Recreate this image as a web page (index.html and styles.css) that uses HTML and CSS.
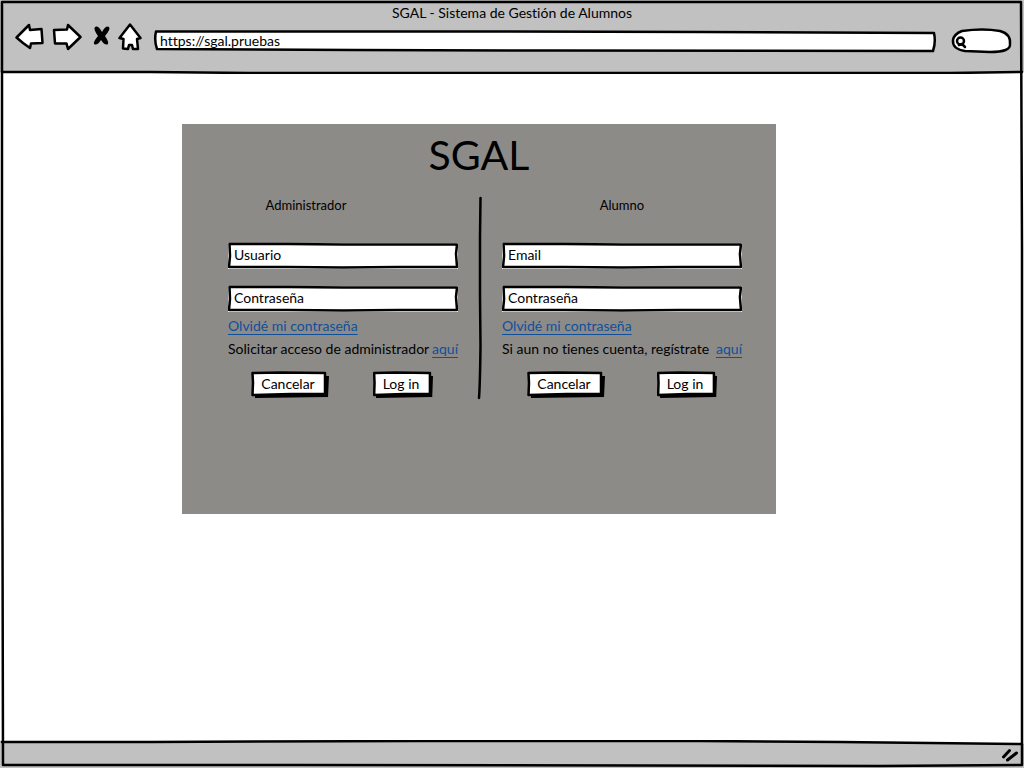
FILE: index.html
```html
<!DOCTYPE html>
<html lang="es">
<head>
<meta charset="utf-8">
<meta name="viewport" content="width=device-width, initial-scale=1">
<title>SGAL - Sistema de Gestión de Alumnos</title>
<link rel="stylesheet" href="styles.css">
</head>
<body>
<svg class="defs" aria-hidden="true">
  <symbol id="sketch-field" viewBox="0 0 230 27" preserveAspectRatio="none">
    <path class="paper" d="M0 1H230V27H0Z"/>
    <path class="ink" d="M1.500 2L60 2L115 2.500L229 2.500L228 12L229 25L170 25L115 25.500L60 25L1 25L2 14Z"/>
  </symbol>
  <symbol id="sketch-button" viewBox="0 0 78 27" preserveAspectRatio="none">
    <path class="solid" d="M4 5H78L77 26L4 27Z"/>
    <path class="paper ink" d="M1.500 2L30 1.500L74 2L74 23L40 23L1.500 24L2 12Z"/>
  </symbol>
</svg>
<div class="window">
  <header class="chrome">
    <p class="window-title">SGAL - Sistema de Gestión de Alumnos</p>
    <div class="toolbar">
      <button class="tool" type="button" aria-label="Atrás"><svg width="30" height="28" viewBox="15 23 30 28"><path class="paper ink" d="M16.500 37.500L29 25L30 30L41.500 29L42.500 43L31 43.500L30 48L23 43Z"/></svg></button>
      <button class="tool tool-forward" type="button" aria-label="Adelante"><svg width="30" height="28" viewBox="52 23 30 28"><path class="paper ink" d="M54 30L67 29.500L68 25L80.500 37L68 49L66.500 43.500L55 43.500Z"/></svg></button>
      <button class="tool tool-stop" type="button" aria-label="Detener"><svg width="18" height="28" viewBox="93 23 18 28"><path class="solid" d="M95 27Q98 25 102 32Q106 25 109 27Q111 29 105 36Q109 42 108 44Q105 46 101 40Q97 46 94 44Q93 42 98 36Q93 29 95 27Z"/></svg></button>
      <button class="tool tool-home" type="button" aria-label="Inicio"><svg width="24" height="28" viewBox="118 23 24 28"><path class="paper ink" d="M130 24.500L140.500 38L137 39L138 49L133 49L132 45H129L128 49L123 48.500L123.500 39L119.500 38Z"/></svg></button>
      <label class="address">
        <svg class="outline" viewBox="0 0 784 22" preserveAspectRatio="none" aria-hidden="true"><path class="paper ink" d="M2 1.500L300 1.500L550 2L781 3Q783 12 780 21L400 20.500L200 20L3 19Q0 10 2 1.500Z"/></svg>
        <input class="text-input" type="text" aria-label="Dirección" value="https://sgal.pruebas">
      </label>
      <label class="search">
        <svg class="outline" viewBox="951 28 61 26" aria-hidden="true"><path class="paper ink" d="M962 31Q983 28 1000 31Q1011 34 1010 44Q1011 52 990 52L965 51Q952 49 953 40Q954 34 962 31Z"/><circle class="ink" cx="960.500" cy="41" r="3.500"/><path class="ink" d="M959 45L962 44L965 47"/></svg>
        <input class="text-input" type="search" aria-label="Buscar">
      </label>
    </div>
    <svg class="rule" viewBox="0 0 1024 4" preserveAspectRatio="none" aria-hidden="true"><path class="fill-page" d="M0 2H1024V4H0Z"/><path class="ink" d="M2 2L150 2L250 3L600 3L950 3L1022 2"/></svg>
  </header>
  <main class="page">
    <section class="card">
      <h1 class="brand">SGAL</h1>
      <div class="forms">
        <form class="login login-admin">
          <h2 class="role">Administrador</h2>
          <label class="field"><svg class="outline" aria-hidden="true"><use href="#sketch-field"/></svg><input class="text-input" type="text" aria-label="Usuario" placeholder="Usuario"></label>
          <label class="field"><svg class="outline" aria-hidden="true"><use href="#sketch-field"/></svg><input class="text-input" type="password" aria-label="Contraseña" placeholder="Contraseña"></label>
          <p class="help"><a href="#recuperar-admin">Olvidé mi contraseña</a></p>
          <p class="help"><span>Solicitar acceso de administrador</span><a href="#acceso">aquí</a></p>
          <div class="actions">
            <button class="button" type="reset"><svg class="outline" aria-hidden="true"><use href="#sketch-button"/></svg><span class="button-text">Cancelar</span></button>
            <button class="button button-small" type="submit"><svg class="outline" aria-hidden="true"><use href="#sketch-button"/></svg><span class="button-text">Log in</span></button>
          </div>
        </form>
        <svg class="divider" viewBox="0 0 6 204" preserveAspectRatio="none" aria-hidden="true"><path class="ink" d="M3.500 2L3 40L3 100L3.500 150Q3 190 2 202"/></svg>
        <form class="login">
          <h2 class="role">Alumno</h2>
          <label class="field"><svg class="outline" aria-hidden="true"><use href="#sketch-field"/></svg><input class="text-input" type="email" aria-label="Email" placeholder="Email"></label>
          <label class="field"><svg class="outline" aria-hidden="true"><use href="#sketch-field"/></svg><input class="text-input" type="password" aria-label="Contraseña" placeholder="Contraseña"></label>
          <p class="help"><a href="#recuperar-alumno">Olvidé mi contraseña</a></p>
          <p class="help"><span>Si aun no tienes cuenta, regístrate</span><a href="#registro">aquí</a></p>
          <div class="actions">
            <button class="button" type="reset"><svg class="outline" aria-hidden="true"><use href="#sketch-button"/></svg><span class="button-text">Cancelar</span></button>
            <button class="button button-small" type="submit"><svg class="outline" aria-hidden="true"><use href="#sketch-button"/></svg><span class="button-text">Log in</span></button>
          </div>
        </form>
      </div>
    </section>
  </main>
  <footer class="status">
    <svg class="rule rule-status" viewBox="0 0 1024 6" preserveAspectRatio="none" aria-hidden="true"><path class="fill-page" d="M0 0H1024V4L840 2L700 1L420 1L2 2Z"/><path class="ink" d="M2 2L150 2L420 1L700 1L840 2L1022 4"/></svg>
    <svg class="grip" width="20" height="16" viewBox="1000 747 20 16" aria-hidden="true"><path class="ink grip-line" d="M1003.500 757L1009.500 750.500M1007.500 760L1016.500 753"/></svg>
  </footer>
  <svg class="frame" viewBox="0 0 1024 768" preserveAspectRatio="none" aria-hidden="true"><path class="ink" d="M2 2L500 2L1021 2L1022 250L1022 600L1022 765L880 766L300 765L3 765L2 300Z"/></svg>
</div>
</body>
</html>
```
FILE: styles.css
```css
* { box-sizing: border-box; }

body {
  margin: 0;
  background: #fff;
  color: #000;
  font: 14px/18px Lato, "Open Sans", sans-serif;
  font-variant-ligatures: none;
}

h1, h2, p { margin: 0; font-weight: 400; }

a { color: #10509a; text-underline-offset: 3px; }

.defs { position: absolute; width: 0; height: 0; }

.ink {
  fill: none;
  stroke: #000;
  stroke-width: 2.5;
  stroke-linejoin: round;
  stroke-linecap: round;
  vector-effect: non-scaling-stroke;
}
.paper, .paper.ink { fill: #fff; }
.solid { fill: #000; }
.fill-page { fill: #fff; }

.window {
  position: relative;
  display: flex;
  flex-direction: column;
  min-height: 100vh;
}

.frame {
  position: absolute;
  inset: 0;
  width: 100%;
  height: 100%;
  pointer-events: none;
}

.chrome {
  display: flex;
  flex-direction: column;
  padding-top: 4px;
  background: #c1c1c1;
}
.window-title { text-align: center; }

.toolbar {
  display: flex;
  align-items: flex-start;
  padding: 1px 12px 16px 15px;
}
.tool {
  display: block;
  padding: 0;
  border: 0;
  background: none;
}
.tool svg { display: block; }
.tool-forward { margin-left: 7px; }
.tool-stop { margin-left: 11px; }
.tool-home { margin-left: 7px; }

.rule { display: block; width: 100%; height: 4px; }

.address, .search, .field, .button { position: relative; display: block; }
.address {
  flex: 1;
  height: 22px;
  margin: 7px 14px 0 12px;
}
.search {
  width: 61px;
  height: 26px;
  margin-top: 5px;
}
.search .text-input { padding-left: 18px; }

.outline {
  position: absolute;
  inset: 0;
  width: 100%;
  height: 100%;
  overflow: visible;
}

.text-input {
  position: relative;
  display: block;
  width: 100%;
  height: 100%;
  padding: 0 6px 2px;
  border: 0;
  background: none;
  color: #000;
  font: inherit;
  font-variant-ligatures: none;
  appearance: none;
}
.text-input::placeholder { color: #000; opacity: 1; }

.page {
  flex: 1;
  display: grid;
  grid-template-columns: 182fr 594fr 248fr;
  align-items: start;
  padding: 50px 0 24px;
}
.card {
  grid-column: 2;
  min-height: 390px;
  padding-top: 6px;
  background: #8d8b88;
}
.brand {
  font-size: 41px;
  line-height: 50px;
  text-align: center;
}
.forms {
  display: grid;
  grid-template-columns: 230fr 44px 240fr;
  padding: 16px 34px 24px 46px;
}
.divider {
  width: 6px;
  height: 204px;
  justify-self: center;
}

.role {
  margin-bottom: 28px;
  font-size: 13px;
  text-align: center;
}
.login-admin .role { padding-right: 74px; }
.login-admin .actions { padding-left: 23px; }
.field { height: 27px; margin-bottom: 16px; }
.field + .help { margin-top: -11px; }
.help {
  display: flex;
  justify-content: space-between;
  margin-bottom: 5px;
  white-space: nowrap;
}
.actions {
  display: flex;
  justify-content: space-between;
  padding: 8px 25px 0;
}
.button {
  width: 78px;
  height: 27px;
  padding: 0 4px 2px 0;
  border: 0;
  background: none;
  color: #000;
  font: inherit;
}
.button-small { width: 60px; }
.button-text { position: relative; }

.status {
  height: 28px;
  background: #c1c1c1;
}
.rule-status { height: 6px; }
.grip {
  display: block;
  margin: 1px 4px 0 auto;
}
.grip-line { stroke-width: 3; }
```
